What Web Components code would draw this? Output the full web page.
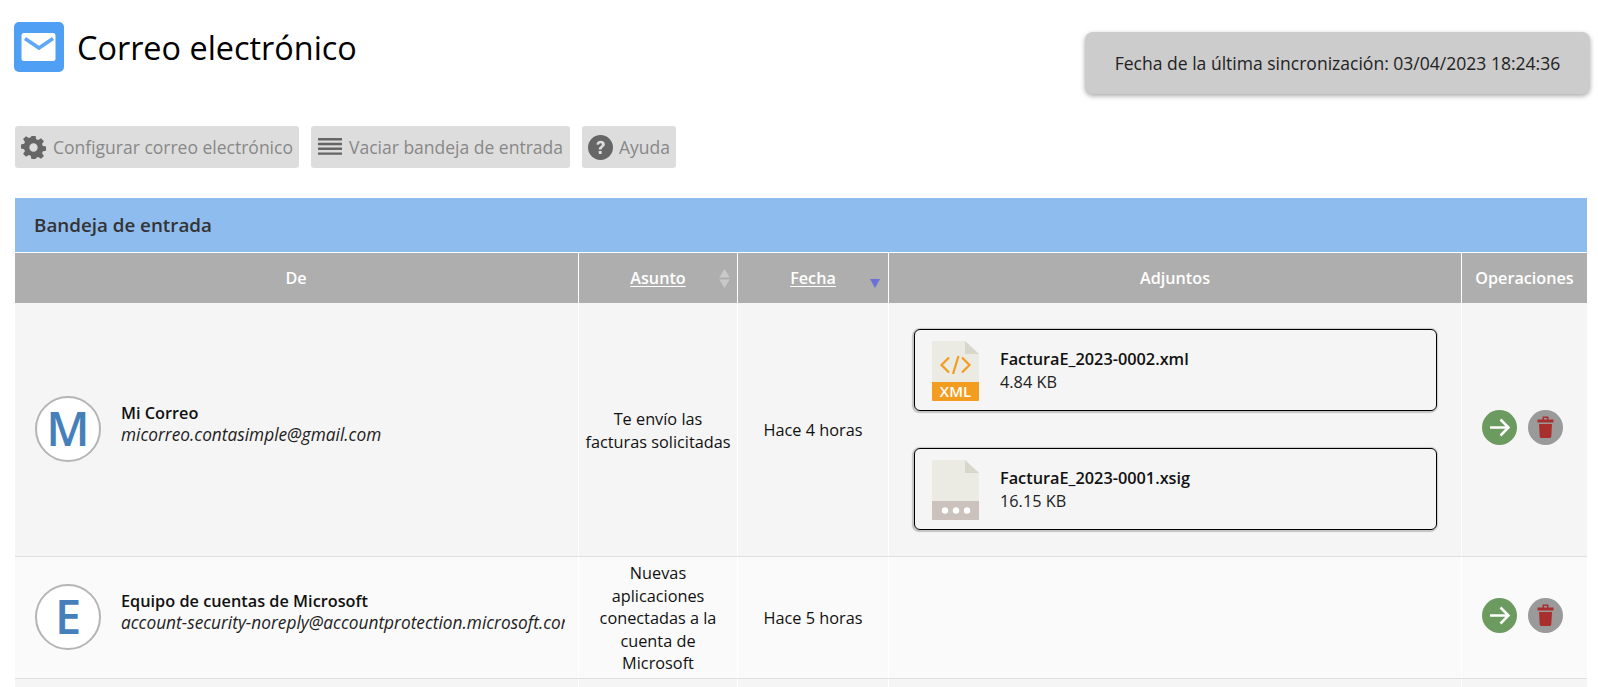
<!DOCTYPE html>
<html lang="es"><head><meta charset="utf-8"><title>Correo electrónico</title>
<style>
html,body{margin:0;padding:0;background:#fff;overflow:hidden;height:687px}
body{font-family:"Open Sans","Liberation Sans",sans-serif;color:#111}
</style></head><body>
<mail-app>
  <page-head slot="head">
    <span slot="title">Correo electrónico</span>
    <sync-badge slot="sync">Fecha de la última sincronización: 03/04/2023 18:24:36</sync-badge>
  </page-head>
  <tool-bar slot="tools">
    <tool-button icon="gear" w="284" pad="6" gap="7">Configurar correo electrónico</tool-button>
    <tool-button icon="lines" w="259" pad="7" gap="7">Vaciar bandeja de entrada</tool-button>
    <tool-button icon="help" w="94" pad="6" gap="6">Ayuda</tool-button>
  </tool-bar>
  <inbox-table slot="table">
    <mail-row h="254" bg="#f5f5f5" letter="M" name="Mi Correo" email="micorreo.contasimple@gmail.com" time="Hace 4 horas">
      <span slot="subject">Te envío las<br>facturas solicitadas</span>
      <attach-card slot="files" kind="xml" name="FacturaE_2023-0002.xml" size="4.84 KB"></attach-card>
      <attach-card slot="files" kind="other" name="FacturaE_2023-0001.xsig" size="16.15 KB"></attach-card>
    </mail-row>
    <mail-row h="122" bg="#fafafa" letter="E" name="Equipo de cuentas de Microsoft" email="account-security-noreply@accountprotection.microsoft.com" time="Hace 5 horas">
      <span slot="subject">Nuevas<br>aplicaciones<br>conectadas a la<br>cuenta de<br>Microsoft</span>
    </mail-row>
    <mail-row h="40" bg="#f5f5f5"></mail-row>
  </inbox-table>
</mail-app>
<script>
function def(name, css, html){
  customElements.define(name, class extends HTMLElement{
    constructor(){super();this.attachShadow({mode:'open'});}
    connectedCallback(){
      const a=n=>this.getAttribute(n)||'';
      this.shadowRoot.innerHTML='<style>'+css+'</style>'+(typeof html==='function'?html(a):html);
    }
  });
}
def('mail-app',':host{display:block;width:1572px;padding:0 11px 0 15px;box-sizing:content-box}',
 '<slot name="head"></slot><slot name="tools"></slot><slot name="table"></slot>');

def('page-head',`:host{display:flex;justify-content:space-between;align-items:flex-start;height:126px;margin-left:-1px}
 .l{display:flex;align-items:center;gap:13px;margin-top:22px}
 svg{display:block;width:50px;height:50px}
 .t{font-size:32.400px;line-height:50px;color:#000}
 ::slotted([slot=sync]){margin-top:32px;margin-right:-3px}`,
 `<div class="l"><svg viewBox="0 0 50 50"><rect width="50" height="50" rx="5" fill="#4f9ff5"/>
 <rect x="7.500" y="11" width="34" height="28" rx="2.500" fill="#fff"/>
 <path d="M11 16.500 L25 26 L39 16.500" fill="none" stroke="#5fa8f6" stroke-width="3.600"/></svg>
 <div class="t"><slot name="title"></slot></div></div><slot name="sync"></slot>`);

def('sync-badge',`:host{display:flex;align-items:center;justify-content:center;width:505px;height:62px;background:#ccc;border-radius:8px;box-shadow:0 2px 5px rgba(0,0,0,.35);font-size:17.550px;color:#222;white-space:nowrap}`,'<slot></slot>');

def('tool-bar',':host{display:flex;gap:12px;height:72px;align-items:flex-start}','<slot></slot>');

const icons={
 gear:'<svg width="25" height="25" viewBox="0 0 24 24"><path fill="#666" fill-rule="evenodd" d="M10 1h4l.6 3.100 1.900.8 2.700-1.800 2.800 2.800-1.800 2.700.8 1.900 3 .5v4l-3 .6-.8 1.900 1.800 2.600-2.800 2.800-2.700-1.800-1.900.8L14 23h-4l-.6-3.100-1.900-.8-2.700 1.800L2 18.100l1.800-2.600-.8-1.900-3-.6V9l3-.5.8-1.900L2 3.900 4.800 1.100l2.700 1.800 1.900-.8zM12 8a4 4 0 1 0 0 8 4 4 0 0 0 0-8z"/></svg>',
 lines:'<svg width="24" height="20" viewBox="0 0 24 20"><path fill="#666" d="M0 1h24v2.400H0zM0 5.800h24v2.400H0zM0 10.600h24V13H0zM0 15.400h24v2.400H0z"/></svg>',
 help:'<svg width="25" height="25" viewBox="0 0 26 26"><circle cx="13" cy="13" r="13" fill="#666"/><path d="M8.800 10c.1-2.600 2-4 4.400-4 2.500 0 4.300 1.500 4.300 3.700 0 3-3.300 3.100-3.300 5.500h-3c0-3.500 3.200-3.600 3.200-5.300 0-.9-.6-1.400-1.400-1.400-.9 0-1.500.6-1.600 1.700z M11.200 16.700h3v3h-3z" fill="#ddd"/></svg>'
};
def('tool-button',`:host{display:flex;align-items:center;height:42px;background:#ddd;border-radius:3px;font-size:17.500px;color:#888;white-space:nowrap;box-sizing:border-box}
 svg{flex:none;display:block}`,
 a=>`<style>:host{width:${a('w')}px;padding-left:${a('pad')}px;gap:${a('gap')}px}</style>${icons[a('icon')]}<slot></slot>`);

const grid='grid-template-columns:563px 159px 151px 573px 126px';
def('inbox-table',`:host{display:block}
 .cap{height:55px;background:#8fbcee;display:flex;align-items:center;padding-left:19px;font-size:18.800px;font-weight:600;color:#333;box-sizing:border-box;border-bottom:1px solid #fff}
 .h{display:grid;${grid};height:50px;background:#aeaeae;color:#fff;font-weight:600;font-size:16.200px}
 .h>div{display:flex;align-items:center;justify-content:center;position:relative;border-left:1px solid #fff;box-sizing:border-box;padding-bottom:1px}
 .h>div:first-child{border-left:0}
 u{text-underline-offset:2px}
 .s{position:absolute}`,
 `<div class="cap">Bandeja de entrada</div>
 <div class="h"><div style="padding-right:1px">De</div>
 <div><u>Asunto</u><svg class="s" style="right:6px;top:15px" width="13" height="21" viewBox="0 0 12 20"><path d="M6 1l5 8H1zM6 19l5-8H1z" fill="#c9c9c9"/></svg></div>
 <div><u>Fecha</u><svg class="s" style="right:7px;top:26px" width="12" height="9" viewBox="0 0 12 9"><path d="M1 0h10L6 9z" fill="#6b71d6"/></svg></div>
 <div>Adjuntos</div><div>Operaciones</div></div><slot></slot>`);

def('mail-row',`:host{display:grid;${grid};border-bottom:1px solid #e0e0e0;box-sizing:border-box;font-size:16.300px;color:#111;overflow:hidden}
 .c{border-left:1px solid #fff;box-sizing:border-box;display:flex;align-items:center;justify-content:center;text-align:center;line-height:22.400px;min-width:0;padding-top:2px}
 .de{border-left:0;justify-content:flex-start;padding:0 13px 2px 20px;overflow:hidden;text-align:left}
 .av{flex:none;width:66px;height:66px;box-sizing:border-box;border:2px solid #b5b5b5;border-radius:50%;background:#fff;color:#4580bb;font-size:47px;font-weight:600;display:flex;align-items:center;justify-content:center;line-height:1}
 .who{margin-left:20px;white-space:nowrap;margin-top:-9px;min-width:0;overflow:hidden;flex:1;line-height:21.400px}
 .who b{font-weight:600;display:block}
 .who i{display:block;font-style:italic;color:#222;font-size:17.300px}
 .files{flex-direction:column;gap:37px;align-items:flex-start;padding:0 0 0 25px}
 .ops{gap:11px;padding:0 5px 4px 0}
 .ops svg{display:block}`,
 a=>{const has=a('letter');const h=a('h');
  return `<style>:host{height:${h}px;background:${a('bg')}}</style>`+(has?`
 <div class="c de"><div class="av">${a('letter')}</div><div class="who"><b>${a('name')}</b><i>${a('email')}</i></div></div>
 <div class="c"><div><slot name="subject"></slot></div></div>
 <div class="c">${a('time')}</div>
 <div class="c files"><slot name="files"></slot></div>
 <div class="c ops">
 <svg width="35" height="35" viewBox="0 0 35 35"><circle cx="17.500" cy="17.500" r="17.500" fill="#6b9b5e"/><path d="M8 17.500h18M18.500 9.500l8 8-8 8" fill="none" stroke="#fff" stroke-width="2.500"/></svg>
 <svg width="35" height="35" viewBox="0 0 35 35"><circle cx="17.500" cy="17.500" r="17.500" fill="#9a9a9a"/><path fill="#a92f2f" d="M14.500 6.500h6v3h5v3h-16v-3h5zM16 8v1.500h3V8zM11 14h13l-.7 12.200c0 1-.8 1.800-1.800 1.800h-8c-1 0-1.800-.8-1.800-1.800z"/></svg>
 </div>`:'<div class="c de"></div><div class="c"></div><div class="c"></div><div class="c"></div><div class="c"></div>');});

def('attach-card',`:host{display:flex;align-items:center;width:523px;height:82px;box-sizing:border-box;border:1.500px solid #000;border-radius:6px;box-shadow:-1px 1px 1px 1px #c4c4c4,0 0 1px 1px #ccc;font-size:16.300px;line-height:22.400px;text-align:left;padding-left:17px}
 svg{display:block;flex:none;margin-right:21px;margin-top:1px}
 b{display:block;font-weight:600;color:#111}
 span{display:block;color:#222}
 div{margin-top:1px}`,
 a=>{const xml=a('kind')==='xml';return `<svg width="47" height="60" viewBox="0 0 47 60">
 <path d="M0 1.500A1.500 1.500 0 0 1 1.500 0H33L47 13V59a1 1 0 0 1-1 1H1a1 1 0 0 1-1-1z" fill="#ebeae3"/>
 <path d="M33 0L47 13H33z" fill="#d8d7cb"/>
 ${xml?`<path d="M0 41h47v18a1 1 0 0 1-1 1H1a1 1 0 0 1-1-1z" fill="#f29d1f"/>
 <path d="M17 16.500l-7.500 7.500 7.500 7.500M30 16.500l7.500 7.500-7.500 7.500M26.500 15l-5.500 18" fill="none" stroke="#f29d1f" stroke-width="2.200"/>
 <text x="23.500" y="56" text-anchor="middle" font-family="Open Sans" font-weight="600" font-size="15" fill="#fff">XML</text>`:
 `<path d="M0 41h47v18a1 1 0 0 1-1 1H1a1 1 0 0 1-1-1z" fill="#cbc2bd"/><circle cx="13" cy="50.500" r="3.200" fill="#fff"/><circle cx="24" cy="50.500" r="3.200" fill="#fff"/><circle cx="35" cy="50.500" r="3.200" fill="#fff"/>`}
 </svg><div><b>${a('name')}</b><span>${a('size')}</span></div>`});
</script>
</body></html>
